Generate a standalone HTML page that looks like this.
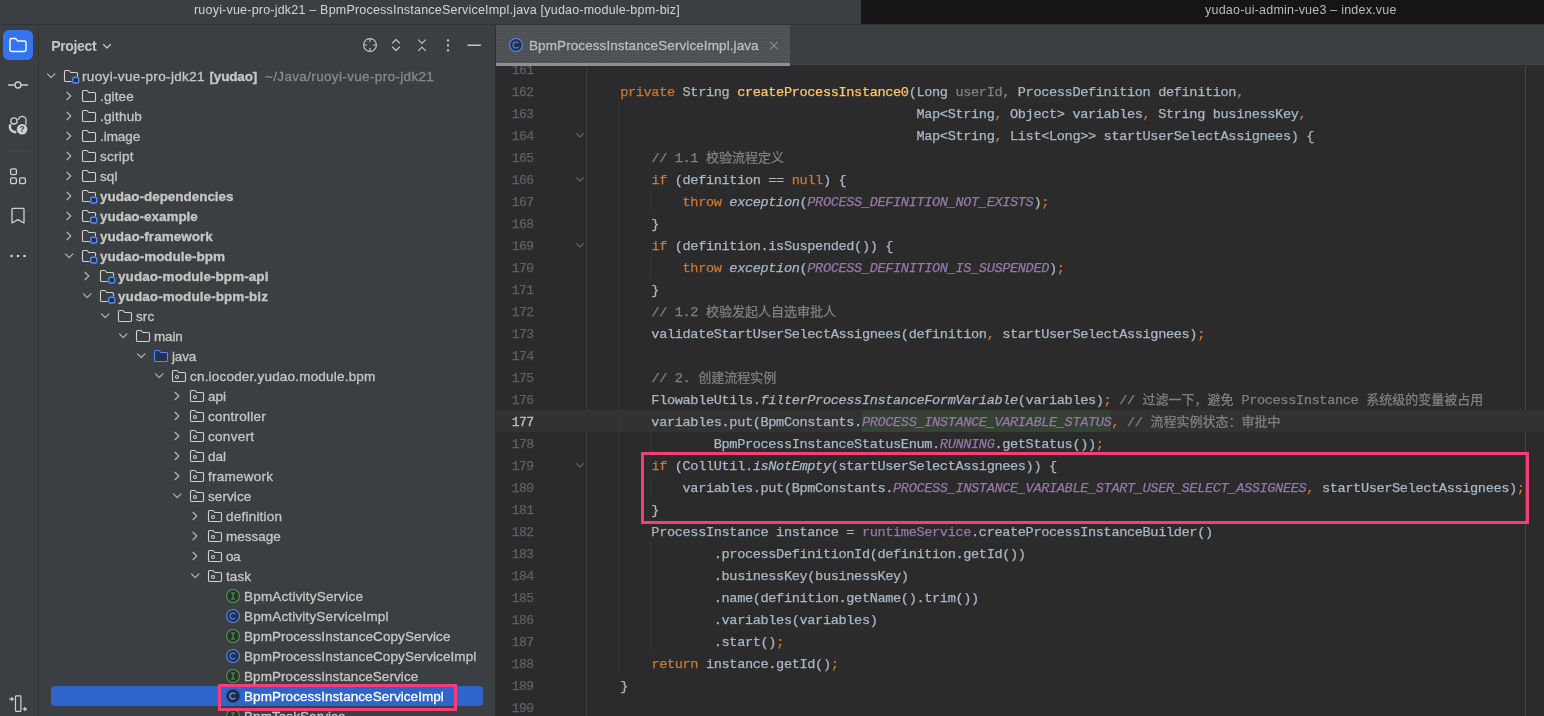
<!DOCTYPE html>
<html lang="zh"><head><meta charset="utf-8"><title>BpmProcessInstanceServiceImpl.java</title>
<style>
*{box-sizing:border-box;margin:0;padding:0}
html,body{width:1544px;height:716px;overflow:hidden;background:#3c3f41}
body{position:relative;font-family:"Liberation Sans", "Noto Sans CJK SC", sans-serif;font-size:13px;color:#c6c6c6}
#root{position:absolute;left:0;top:0;width:1544px;height:716px;will-change:transform}
.abs{position:absolute}
#titleLbg{position:absolute;left:0;top:0;width:861px;height:24px;background:#3c3f41}
#titleRbg{position:absolute;left:861px;top:0;width:683px;height:24px;background:#151515}
#titleL{position:absolute;left:194px;top:1px;line-height:19.4px;font-size:12.5px;color:#d4d4d4;white-space:pre}
#titleR{position:absolute;left:1205px;top:1px;line-height:19.4px;font-size:12.5px;color:#bababa;white-space:pre}
#titleB{position:absolute;left:0;top:24px;width:1544px;height:1px;background:#313335}
#strip{position:absolute;left:0;top:25px;width:38px;height:691px;background:#3c3f41}
#stripB{position:absolute;left:38px;top:25px;width:1px;height:691px;background:#323436}
#proj{position:absolute;left:39px;top:25px;width:456px;height:691px;background:#3c3f41;overflow:hidden}
#projB{position:absolute;left:495px;top:25px;width:1px;height:691px;background:#2d2f31}
#tabs{position:absolute;left:496px;top:25px;width:1048px;height:40px;background:#3c3f41}
#tabsB{position:absolute;left:496px;top:65px;width:1048px;height:1px;background:#2f3032}
#tab{position:absolute;left:496px;top:25px;width:294px;height:38px;background-color:#4d5153;background-image:radial-gradient(circle at 1.5px 1.5px,rgba(255,255,255,.07) 0.4px,transparent 0.9px);background-size:3px 3px}
#tabU{position:absolute;left:496px;top:63px;width:294px;height:3px;background:#8a9099}
#tabT{position:absolute;left:529px;top:36px;line-height:20px;font-size:13.5px;color:#bcbcbc;-webkit-text-stroke:0.3px;white-space:nowrap}
#editor{position:absolute;left:496px;top:66px;width:1048px;height:650px;background:#2b2b2b}
#gutL{position:absolute;left:586px;top:66px;width:1px;height:650px;background:#3a3c3f}
#margin{position:absolute;left:1525px;top:66px;width:1px;height:650px;background:#45484c}
#clip{position:absolute;left:0;top:66px;width:1544px;height:650px;overflow:hidden}
#clip>div{position:absolute;left:0;top:-66px;width:1544px;height:716px}
.ln{position:absolute;left:495.5px;width:38px;height:22px;line-height:22px;padding-top:1.5px;text-align:right;font-family:"Liberation Mono", "Noto Sans CJK SC", monospace;font-size:13px;color:#5d6165;white-space:pre;letter-spacing:-0.55px;-webkit-text-stroke:0.25px}
.ln.cur{color:#bdbdbd;-webkit-text-stroke:0.3px}
.cl{position:absolute;left:589px;height:22px;line-height:22px;padding-top:1.5px;font-family:"Liberation Mono", "Noto Sans CJK SC", monospace;font-size:13.6px;letter-spacing:-0.361px;color:#a9b7c6;white-space:pre;-webkit-text-stroke:0.25px}
.z{font-size:13px;letter-spacing:0}
.curline{position:absolute;left:496px;width:1048px;height:22px;background:#323232}
.guide{position:absolute;width:1px;background:#353638}
.fold{position:absolute;left:572px}
.k{color:#cc7832} .m{color:#ffc66d} .c{color:#808080} .p{color:#9876aa;font-style:italic} .h{color:#9876aa;font-style:italic;background:#344134;padding:4.8px 0 2.8px}
.f{color:#9876aa} .i{font-style:italic} .g{color:#808080}
.box{position:absolute;border:3px solid #f53d78}
.row{position:absolute;left:0;width:495px;height:20px;white-space:nowrap;color:#c6c6c6}
.row .chev{position:absolute;top:2px}
.row .ico{position:absolute;top:2.4px}
.row .lbl{position:absolute;top:1px;line-height:20px;font-size:13.5px;white-space:pre;-webkit-text-stroke:0.3px}
.row b{font-weight:bold}
.row .path{color:#868a91}
.row.selected{color:#fff}
.selrow{position:absolute;left:51px;width:432px;height:20px;background:#2f65ca;border-radius:4px}
#ph{position:absolute;left:51.2px;top:36px;line-height:20px;font-size:14px;letter-spacing:-0.33px;font-weight:bold;color:#c6c6c6}
</style></head><body><div id="root">
<div id="titleLbg"></div><div id="titleRbg"></div>
<div id="titleL" style="letter-spacing:0.206px">ruoyi-vue-pro-jdk21 – BpmProcessInstanceServiceImpl.java [yudao-module-bpm-biz]</div>
<div id="titleR" style="letter-spacing:0.221px">yudao-ui-admin-vue3 – index.vue</div>
<div id="titleB"></div>
<div id="strip"></div><div id="stripB"></div>
<div class="abs" style="left:3px;top:30px;width:30px;height:30px;border-radius:6px;background:#3574f0"></div>
<svg class="abs" style="left:8px;top:35px" width="20" height="20" viewBox="0 0 20 20"><path d="M2 5.2 Q2 3.5 3.7 3.5 H7.6 L9.8 6 H16.3 Q18 6 18 7.7 V14.8 Q18 16.5 16.3 16.5 H3.7 Q2 16.5 2 14.8 Z" fill="none" stroke="#fff" stroke-width="1.4" stroke-linejoin="round"/></svg>
<svg class="abs" style="left:8px;top:75px" width="20" height="20" viewBox="0 0 20 20"><circle cx="10" cy="10" r="3" fill="none" stroke="#ced0d6" stroke-width="1.3"/><path d="M0.5 10 H7 M13 10 H19.5" stroke="#ced0d6" stroke-width="1.3" stroke-linecap="round"/></svg>
<svg class="abs" style="left:7px;top:114px" width="22" height="22" viewBox="0 0 22 22"><circle cx="7" cy="6.9" r="3.1" fill="none" stroke="#ced0d6" stroke-width="1.3"/><path d="M11.6 5.2 A3.5 3.5 0 0 1 18.9 7.3 V10.2" fill="none" stroke="#ced0d6" stroke-width="1.3" stroke-linecap="round"/><path d="M3.1 11.2 Q1.8 16.9 8.3 18.3" fill="none" stroke="#ced0d6" stroke-width="2.5" stroke-linecap="round"/><circle cx="15.1" cy="15.2" r="5.3" fill="#ced0d6"/><text x="15.1" y="18.3" font-size="8.5" font-weight="bold" text-anchor="middle" fill="#3c3f41" font-family="Liberation Sans, sans-serif">?</text></svg>
<div class="abs" style="left:6px;top:150px;width:24px;height:1px;background:repeating-linear-gradient(90deg,#4e5157 0 1px,transparent 1px 2px)"></div>
<svg class="abs" style="left:8px;top:166px" width="20" height="20" viewBox="0 0 20 20"><rect x="2.6" y="2.8" width="5.8" height="5.8" rx="1.4" fill="none" stroke="#ced0d6" stroke-width="1.3"/><rect x="2.6" y="11.8" width="5.8" height="5.8" rx="1.4" fill="none" stroke="#ced0d6" stroke-width="1.3"/><rect x="11.6" y="11.8" width="5.8" height="5.8" rx="1.4" fill="none" stroke="#ced0d6" stroke-width="1.3"/></svg>
<svg class="abs" style="left:8px;top:206px" width="20" height="20" viewBox="0 0 20 20"><path d="M4 3.2 Q4 2.4 4.8 2.4 H15.2 Q16 2.4 16 3.2 V17 L10 13.6 L4 17 Z" fill="none" stroke="#ced0d6" stroke-width="1.3" stroke-linejoin="round"/></svg>
<svg class="abs" style="left:8px;top:246px" width="20" height="20" viewBox="0 0 20 20"><circle cx="3.5" cy="10" r="1.35" fill="#ced0d6"/><circle cx="10" cy="10" r="1.35" fill="#ced0d6"/><circle cx="16.5" cy="10" r="1.35" fill="#ced0d6"/></svg>
<svg class="abs" style="left:6px;top:692px" width="24" height="22" viewBox="0 0 24 22"><rect x="9.5" y="3.8" width="5.4" height="15.6" rx="0.8" fill="none" stroke="#ced0d6" stroke-width="1.2"/><path d="M3 7 H6" stroke="#ced0d6" stroke-width="1.1"/><path d="M5.3 4.6 L8.2 7 L5.3 9.4 Z" fill="#ced0d6"/><path d="M16.5 17 H19" stroke="#ced0d6" stroke-width="1.1"/><path d="M18.3 14.6 L21.2 17 L18.3 19.4 Z" fill="#ced0d6"/></svg>
<div id="proj"></div><div id="projB"></div>
<div id="ph">Project</div>
<svg class="abs" style="left:99px;top:38px" width="16" height="16" viewBox="0 0 16 16"><path d="M4.5 6.5 L8 10 L11.5 6.5" fill="none" stroke="#c3c5c9" stroke-width="1.2" stroke-linecap="round" stroke-linejoin="round"/></svg>
<svg class="abs" style="left:362px;top:37px" width="16" height="16" viewBox="0 0 16 16"><circle cx="8" cy="8" r="6.4" fill="none" stroke="#c3c5c9" stroke-width="1.1"/><path d="M8 1.6 V5 M8 11 V14.4 M1.6 8 H5 M11 8 H14.4" stroke="#c3c5c9" stroke-width="1.1"/></svg>
<svg class="abs" style="left:388px;top:37px" width="16" height="16" viewBox="0 0 16 16"><path d="M4.5 6 L8 2.5 L11.5 6 M4.5 10 L8 13.5 L11.5 10" fill="none" stroke="#c3c5c9" stroke-width="1.1" stroke-linecap="round" stroke-linejoin="round"/></svg>
<svg class="abs" style="left:414px;top:37px" width="16" height="16" viewBox="0 0 16 16"><path d="M4.5 2.8 L8 6.3 L11.5 2.8 M4.5 13.7 L8 10.2 L11.5 13.7" fill="none" stroke="#c3c5c9" stroke-width="1.1" stroke-linecap="round" stroke-linejoin="round"/></svg>
<svg class="abs" style="left:440px;top:37px" width="16" height="16" viewBox="0 0 16 16"><rect x="6.9" y="2.2" width="2.2" height="2.2" rx="0.7" fill="#c3c5c9"/><rect x="6.9" y="7.2" width="2.2" height="2.2" rx="0.7" fill="#c3c5c9"/><rect x="6.9" y="12.2" width="2.2" height="2.2" rx="0.7" fill="#c3c5c9"/></svg>
<svg class="abs" style="left:465px;top:37px" width="18" height="16" viewBox="0 0 18 16"><path d="M3 8.3 H15.3" stroke="#c3c5c9" stroke-width="1.6" stroke-linecap="round" fill="none"/></svg>
<div class="row" style="top:66px"><svg class="chev" style="left:42.5px" width="16" height="16" viewBox="0 0 16 16"><path d="M4.5 5.9 L8.2 9.6 L11.9 5.9" fill="none" stroke="#b0b3b8" stroke-width="1.25" stroke-linecap="round" stroke-linejoin="round"/></svg><svg class="ico" style="left:63px" width="16" height="16" viewBox="0 0 16 16" overflow="visible"><path d="M8.2 13.5 H2.6 Q1.5 13.5 1.5 12.4 V3.6 Q1.5 2.5 2.6 2.5 H6 L7.8 4.5 H13.4 Q14.5 4.5 14.5 5.6 V8" fill="none" stroke="#ced0d6" stroke-width="1.1" stroke-linejoin="round" stroke-linecap="round"/><rect x="9.7" y="9.3" width="6" height="5.7" rx="1.5" fill="#25324d" stroke="#548af7" stroke-width="1.4"/></svg><span class="lbl" style="left:82px;letter-spacing:0.347px">ruoyi-vue-pro-jdk21</span><span class="lbl" style="left:209.5px;letter-spacing:-0.164px"><b>[yudao]</b></span><span class="lbl path" style="left:265px;letter-spacing:0.346px">~/Java/ruoyi-vue-pro-jdk21</span></div>
<div class="row" style="top:86px"><svg class="chev" style="left:60.5px" width="16" height="16" viewBox="0 0 16 16"><path d="M6 4.3 L9.8 8 L6 11.7" fill="none" stroke="#b0b3b8" stroke-width="1.25" stroke-linecap="round" stroke-linejoin="round"/></svg><svg class="ico" style="left:81px" width="16" height="16" viewBox="0 0 16 16" overflow="visible"><path d="M1.5 3.6 Q1.5 2.5 2.6 2.5 H6 L7.8 4.5 H13.4 Q14.5 4.5 14.5 5.6 V12.4 Q14.5 13.5 13.4 13.5 H2.6 Q1.5 13.5 1.5 12.4 Z" fill="none" stroke="#ced0d6" stroke-width="1.1" stroke-linejoin="round"/></svg><span class="lbl" style="left:100px;letter-spacing:0.145px">.gitee</span></div>
<div class="row" style="top:106px"><svg class="chev" style="left:60.5px" width="16" height="16" viewBox="0 0 16 16"><path d="M6 4.3 L9.8 8 L6 11.7" fill="none" stroke="#b0b3b8" stroke-width="1.25" stroke-linecap="round" stroke-linejoin="round"/></svg><svg class="ico" style="left:81px" width="16" height="16" viewBox="0 0 16 16" overflow="visible"><path d="M1.5 3.6 Q1.5 2.5 2.6 2.5 H6 L7.8 4.5 H13.4 Q14.5 4.5 14.5 5.6 V12.4 Q14.5 13.5 13.4 13.5 H2.6 Q1.5 13.5 1.5 12.4 Z" fill="none" stroke="#ced0d6" stroke-width="1.1" stroke-linejoin="round"/></svg><span class="lbl" style="left:100px;letter-spacing:0.222px">.github</span></div>
<div class="row" style="top:126px"><svg class="chev" style="left:60.5px" width="16" height="16" viewBox="0 0 16 16"><path d="M6 4.3 L9.8 8 L6 11.7" fill="none" stroke="#b0b3b8" stroke-width="1.25" stroke-linecap="round" stroke-linejoin="round"/></svg><svg class="ico" style="left:81px" width="16" height="16" viewBox="0 0 16 16" overflow="visible"><path d="M1.5 3.6 Q1.5 2.5 2.6 2.5 H6 L7.8 4.5 H13.4 Q14.5 4.5 14.5 5.6 V12.4 Q14.5 13.5 13.4 13.5 H2.6 Q1.5 13.5 1.5 12.4 Z" fill="none" stroke="#ced0d6" stroke-width="1.1" stroke-linejoin="round"/></svg><span class="lbl" style="left:100px;letter-spacing:-0.055px">.image</span></div>
<div class="row" style="top:146px"><svg class="chev" style="left:60.5px" width="16" height="16" viewBox="0 0 16 16"><path d="M6 4.3 L9.8 8 L6 11.7" fill="none" stroke="#b0b3b8" stroke-width="1.25" stroke-linecap="round" stroke-linejoin="round"/></svg><svg class="ico" style="left:81px" width="16" height="16" viewBox="0 0 16 16" overflow="visible"><path d="M1.5 3.6 Q1.5 2.5 2.6 2.5 H6 L7.8 4.5 H13.4 Q14.5 4.5 14.5 5.6 V12.4 Q14.5 13.5 13.4 13.5 H2.6 Q1.5 13.5 1.5 12.4 Z" fill="none" stroke="#ced0d6" stroke-width="1.1" stroke-linejoin="round"/></svg><span class="lbl" style="left:100px;letter-spacing:0.272px">script</span></div>
<div class="row" style="top:166px"><svg class="chev" style="left:60.5px" width="16" height="16" viewBox="0 0 16 16"><path d="M6 4.3 L9.8 8 L6 11.7" fill="none" stroke="#b0b3b8" stroke-width="1.25" stroke-linecap="round" stroke-linejoin="round"/></svg><svg class="ico" style="left:81px" width="16" height="16" viewBox="0 0 16 16" overflow="visible"><path d="M1.5 3.6 Q1.5 2.5 2.6 2.5 H6 L7.8 4.5 H13.4 Q14.5 4.5 14.5 5.6 V12.4 Q14.5 13.5 13.4 13.5 H2.6 Q1.5 13.5 1.5 12.4 Z" fill="none" stroke="#ced0d6" stroke-width="1.1" stroke-linejoin="round"/></svg><span class="lbl" style="left:100px;letter-spacing:0.111px">sql</span></div>
<div class="row" style="top:186px"><svg class="chev" style="left:60.5px" width="16" height="16" viewBox="0 0 16 16"><path d="M6 4.3 L9.8 8 L6 11.7" fill="none" stroke="#b0b3b8" stroke-width="1.25" stroke-linecap="round" stroke-linejoin="round"/></svg><svg class="ico" style="left:81px" width="16" height="16" viewBox="0 0 16 16" overflow="visible"><path d="M8.2 13.5 H2.6 Q1.5 13.5 1.5 12.4 V3.6 Q1.5 2.5 2.6 2.5 H6 L7.8 4.5 H13.4 Q14.5 4.5 14.5 5.6 V8" fill="none" stroke="#ced0d6" stroke-width="1.1" stroke-linejoin="round" stroke-linecap="round"/><rect x="9.7" y="9.3" width="6" height="5.7" rx="1.5" fill="#25324d" stroke="#548af7" stroke-width="1.4"/></svg><span class="lbl" style="left:100px;letter-spacing:-0.044px"><b>yudao-dependencies</b></span></div>
<div class="row" style="top:206px"><svg class="chev" style="left:60.5px" width="16" height="16" viewBox="0 0 16 16"><path d="M6 4.3 L9.8 8 L6 11.7" fill="none" stroke="#b0b3b8" stroke-width="1.25" stroke-linecap="round" stroke-linejoin="round"/></svg><svg class="ico" style="left:81px" width="16" height="16" viewBox="0 0 16 16" overflow="visible"><path d="M8.2 13.5 H2.6 Q1.5 13.5 1.5 12.4 V3.6 Q1.5 2.5 2.6 2.5 H6 L7.8 4.5 H13.4 Q14.5 4.5 14.5 5.6 V8" fill="none" stroke="#ced0d6" stroke-width="1.1" stroke-linejoin="round" stroke-linecap="round"/><rect x="9.7" y="9.3" width="6" height="5.7" rx="1.5" fill="#25324d" stroke="#548af7" stroke-width="1.4"/></svg><span class="lbl" style="left:100px;letter-spacing:-0.038px"><b>yudao-example</b></span></div>
<div class="row" style="top:226px"><svg class="chev" style="left:60.5px" width="16" height="16" viewBox="0 0 16 16"><path d="M6 4.3 L9.8 8 L6 11.7" fill="none" stroke="#b0b3b8" stroke-width="1.25" stroke-linecap="round" stroke-linejoin="round"/></svg><svg class="ico" style="left:81px" width="16" height="16" viewBox="0 0 16 16" overflow="visible"><path d="M8.2 13.5 H2.6 Q1.5 13.5 1.5 12.4 V3.6 Q1.5 2.5 2.6 2.5 H6 L7.8 4.5 H13.4 Q14.5 4.5 14.5 5.6 V8" fill="none" stroke="#ced0d6" stroke-width="1.1" stroke-linejoin="round" stroke-linecap="round"/><rect x="9.7" y="9.3" width="6" height="5.7" rx="1.5" fill="#25324d" stroke="#548af7" stroke-width="1.4"/></svg><span class="lbl" style="left:100px;letter-spacing:0.018px"><b>yudao-framework</b></span></div>
<div class="row" style="top:246px"><svg class="chev" style="left:60.5px" width="16" height="16" viewBox="0 0 16 16"><path d="M4.5 5.9 L8.2 9.6 L11.9 5.9" fill="none" stroke="#b0b3b8" stroke-width="1.25" stroke-linecap="round" stroke-linejoin="round"/></svg><svg class="ico" style="left:81px" width="16" height="16" viewBox="0 0 16 16" overflow="visible"><path d="M8.2 13.5 H2.6 Q1.5 13.5 1.5 12.4 V3.6 Q1.5 2.5 2.6 2.5 H6 L7.8 4.5 H13.4 Q14.5 4.5 14.5 5.6 V8" fill="none" stroke="#ced0d6" stroke-width="1.1" stroke-linejoin="round" stroke-linecap="round"/><rect x="9.7" y="9.3" width="6" height="5.7" rx="1.5" fill="#25324d" stroke="#548af7" stroke-width="1.4"/></svg><span class="lbl" style="left:100px;letter-spacing:-0.016px"><b>yudao-module-bpm</b></span></div>
<div class="row" style="top:266px"><svg class="chev" style="left:78.5px" width="16" height="16" viewBox="0 0 16 16"><path d="M6 4.3 L9.8 8 L6 11.7" fill="none" stroke="#b0b3b8" stroke-width="1.25" stroke-linecap="round" stroke-linejoin="round"/></svg><svg class="ico" style="left:99px" width="16" height="16" viewBox="0 0 16 16" overflow="visible"><path d="M8.2 13.5 H2.6 Q1.5 13.5 1.5 12.4 V3.6 Q1.5 2.5 2.6 2.5 H6 L7.8 4.5 H13.4 Q14.5 4.5 14.5 5.6 V8" fill="none" stroke="#ced0d6" stroke-width="1.1" stroke-linejoin="round" stroke-linecap="round"/><rect x="9.7" y="9.3" width="6" height="5.7" rx="1.5" fill="#25324d" stroke="#548af7" stroke-width="1.4"/></svg><span class="lbl" style="left:118px;letter-spacing:0.062px"><b>yudao-module-bpm-api</b></span></div>
<div class="row" style="top:286px"><svg class="chev" style="left:78.5px" width="16" height="16" viewBox="0 0 16 16"><path d="M4.5 5.9 L8.2 9.6 L11.9 5.9" fill="none" stroke="#b0b3b8" stroke-width="1.25" stroke-linecap="round" stroke-linejoin="round"/></svg><svg class="ico" style="left:99px" width="16" height="16" viewBox="0 0 16 16" overflow="visible"><path d="M8.2 13.5 H2.6 Q1.5 13.5 1.5 12.4 V3.6 Q1.5 2.5 2.6 2.5 H6 L7.8 4.5 H13.4 Q14.5 4.5 14.5 5.6 V8" fill="none" stroke="#ced0d6" stroke-width="1.1" stroke-linejoin="round" stroke-linecap="round"/><rect x="9.7" y="9.3" width="6" height="5.7" rx="1.5" fill="#25324d" stroke="#548af7" stroke-width="1.4"/></svg><span class="lbl" style="left:118px;letter-spacing:0.075px"><b>yudao-module-bpm-biz</b></span></div>
<div class="row" style="top:306px"><svg class="chev" style="left:96.5px" width="16" height="16" viewBox="0 0 16 16"><path d="M4.5 5.9 L8.2 9.6 L11.9 5.9" fill="none" stroke="#b0b3b8" stroke-width="1.25" stroke-linecap="round" stroke-linejoin="round"/></svg><svg class="ico" style="left:117px" width="16" height="16" viewBox="0 0 16 16" overflow="visible"><path d="M1.5 3.6 Q1.5 2.5 2.6 2.5 H6 L7.8 4.5 H13.4 Q14.5 4.5 14.5 5.6 V12.4 Q14.5 13.5 13.4 13.5 H2.6 Q1.5 13.5 1.5 12.4 Z" fill="none" stroke="#ced0d6" stroke-width="1.1" stroke-linejoin="round"/></svg><span class="lbl" style="left:136px;letter-spacing:0.100px">src</span></div>
<div class="row" style="top:326px"><svg class="chev" style="left:114.5px" width="16" height="16" viewBox="0 0 16 16"><path d="M4.5 5.9 L8.2 9.6 L11.9 5.9" fill="none" stroke="#b0b3b8" stroke-width="1.25" stroke-linecap="round" stroke-linejoin="round"/></svg><svg class="ico" style="left:135px" width="16" height="16" viewBox="0 0 16 16" overflow="visible"><path d="M1.5 3.6 Q1.5 2.5 2.6 2.5 H6 L7.8 4.5 H13.4 Q14.5 4.5 14.5 5.6 V12.4 Q14.5 13.5 13.4 13.5 H2.6 Q1.5 13.5 1.5 12.4 Z" fill="none" stroke="#ced0d6" stroke-width="1.1" stroke-linejoin="round"/></svg><span class="lbl" style="left:154px;letter-spacing:-0.166px">main</span></div>
<div class="row" style="top:346px"><svg class="chev" style="left:132.5px" width="16" height="16" viewBox="0 0 16 16"><path d="M4.5 5.9 L8.2 9.6 L11.9 5.9" fill="none" stroke="#b0b3b8" stroke-width="1.25" stroke-linecap="round" stroke-linejoin="round"/></svg><svg class="ico" style="left:153px" width="16" height="16" viewBox="0 0 16 16" overflow="visible"><path d="M1.5 3.6 Q1.5 2.5 2.6 2.5 H6 L7.8 4.5 H13.4 Q14.5 4.5 14.5 5.6 V12.4 Q14.5 13.5 13.4 13.5 H2.6 Q1.5 13.5 1.5 12.4 Z" fill="#25324d" stroke="#548af7" stroke-width="1.1" stroke-linejoin="round"/></svg><span class="lbl" style="left:172px;letter-spacing:-0.141px">java</span></div>
<div class="row" style="top:366px"><svg class="chev" style="left:150.5px" width="16" height="16" viewBox="0 0 16 16"><path d="M4.5 5.9 L8.2 9.6 L11.9 5.9" fill="none" stroke="#b0b3b8" stroke-width="1.25" stroke-linecap="round" stroke-linejoin="round"/></svg><svg class="ico" style="left:171px" width="16" height="16" viewBox="0 0 16 16" overflow="visible"><path d="M1.5 3.6 Q1.5 2.5 2.6 2.5 H6 L7.8 4.5 H13.4 Q14.5 4.5 14.5 5.6 V12.4 Q14.5 13.5 13.4 13.5 H2.6 Q1.5 13.5 1.5 12.4 Z" fill="none" stroke="#ced0d6" stroke-width="1.1" stroke-linejoin="round"/><circle cx="6" cy="9" r="1.5" fill="none" stroke="#ced0d6" stroke-width="1.1"/></svg><span class="lbl" style="left:190px;letter-spacing:0.199px">cn.iocoder.yudao.module.bpm</span></div>
<div class="row" style="top:386px"><svg class="chev" style="left:168.5px" width="16" height="16" viewBox="0 0 16 16"><path d="M6 4.3 L9.8 8 L6 11.7" fill="none" stroke="#b0b3b8" stroke-width="1.25" stroke-linecap="round" stroke-linejoin="round"/></svg><svg class="ico" style="left:189px" width="16" height="16" viewBox="0 0 16 16" overflow="visible"><path d="M1.5 3.6 Q1.5 2.5 2.6 2.5 H6 L7.8 4.5 H13.4 Q14.5 4.5 14.5 5.6 V12.4 Q14.5 13.5 13.4 13.5 H2.6 Q1.5 13.5 1.5 12.4 Z" fill="none" stroke="#ced0d6" stroke-width="1.1" stroke-linejoin="round"/><circle cx="6" cy="9" r="1.5" fill="none" stroke="#ced0d6" stroke-width="1.1"/></svg><span class="lbl" style="left:208px;letter-spacing:-0.005px">api</span></div>
<div class="row" style="top:406px"><svg class="chev" style="left:168.5px" width="16" height="16" viewBox="0 0 16 16"><path d="M6 4.3 L9.8 8 L6 11.7" fill="none" stroke="#b0b3b8" stroke-width="1.25" stroke-linecap="round" stroke-linejoin="round"/></svg><svg class="ico" style="left:189px" width="16" height="16" viewBox="0 0 16 16" overflow="visible"><path d="M1.5 3.6 Q1.5 2.5 2.6 2.5 H6 L7.8 4.5 H13.4 Q14.5 4.5 14.5 5.6 V12.4 Q14.5 13.5 13.4 13.5 H2.6 Q1.5 13.5 1.5 12.4 Z" fill="none" stroke="#ced0d6" stroke-width="1.1" stroke-linejoin="round"/><circle cx="6" cy="9" r="1.5" fill="none" stroke="#ced0d6" stroke-width="1.1"/></svg><span class="lbl" style="left:208px;letter-spacing:0.247px">controller</span></div>
<div class="row" style="top:426px"><svg class="chev" style="left:168.5px" width="16" height="16" viewBox="0 0 16 16"><path d="M6 4.3 L9.8 8 L6 11.7" fill="none" stroke="#b0b3b8" stroke-width="1.25" stroke-linecap="round" stroke-linejoin="round"/></svg><svg class="ico" style="left:189px" width="16" height="16" viewBox="0 0 16 16" overflow="visible"><path d="M1.5 3.6 Q1.5 2.5 2.6 2.5 H6 L7.8 4.5 H13.4 Q14.5 4.5 14.5 5.6 V12.4 Q14.5 13.5 13.4 13.5 H2.6 Q1.5 13.5 1.5 12.4 Z" fill="none" stroke="#ced0d6" stroke-width="1.1" stroke-linejoin="round"/><circle cx="6" cy="9" r="1.5" fill="none" stroke="#ced0d6" stroke-width="1.1"/></svg><span class="lbl" style="left:208px;letter-spacing:0.288px">convert</span></div>
<div class="row" style="top:446px"><svg class="chev" style="left:168.5px" width="16" height="16" viewBox="0 0 16 16"><path d="M6 4.3 L9.8 8 L6 11.7" fill="none" stroke="#b0b3b8" stroke-width="1.25" stroke-linecap="round" stroke-linejoin="round"/></svg><svg class="ico" style="left:189px" width="16" height="16" viewBox="0 0 16 16" overflow="visible"><path d="M1.5 3.6 Q1.5 2.5 2.6 2.5 H6 L7.8 4.5 H13.4 Q14.5 4.5 14.5 5.6 V12.4 Q14.5 13.5 13.4 13.5 H2.6 Q1.5 13.5 1.5 12.4 Z" fill="none" stroke="#ced0d6" stroke-width="1.1" stroke-linejoin="round"/><circle cx="6" cy="9" r="1.5" fill="none" stroke="#ced0d6" stroke-width="1.1"/></svg><span class="lbl" style="left:208px;letter-spacing:-0.005px">dal</span></div>
<div class="row" style="top:466px"><svg class="chev" style="left:168.5px" width="16" height="16" viewBox="0 0 16 16"><path d="M6 4.3 L9.8 8 L6 11.7" fill="none" stroke="#b0b3b8" stroke-width="1.25" stroke-linecap="round" stroke-linejoin="round"/></svg><svg class="ico" style="left:189px" width="16" height="16" viewBox="0 0 16 16" overflow="visible"><path d="M1.5 3.6 Q1.5 2.5 2.6 2.5 H6 L7.8 4.5 H13.4 Q14.5 4.5 14.5 5.6 V12.4 Q14.5 13.5 13.4 13.5 H2.6 Q1.5 13.5 1.5 12.4 Z" fill="none" stroke="#ced0d6" stroke-width="1.1" stroke-linejoin="round"/><circle cx="6" cy="9" r="1.5" fill="none" stroke="#ced0d6" stroke-width="1.1"/></svg><span class="lbl" style="left:208px;letter-spacing:0.254px">framework</span></div>
<div class="row" style="top:486px"><svg class="chev" style="left:168.5px" width="16" height="16" viewBox="0 0 16 16"><path d="M4.5 5.9 L8.2 9.6 L11.9 5.9" fill="none" stroke="#b0b3b8" stroke-width="1.25" stroke-linecap="round" stroke-linejoin="round"/></svg><svg class="ico" style="left:189px" width="16" height="16" viewBox="0 0 16 16" overflow="visible"><path d="M1.5 3.6 Q1.5 2.5 2.6 2.5 H6 L7.8 4.5 H13.4 Q14.5 4.5 14.5 5.6 V12.4 Q14.5 13.5 13.4 13.5 H2.6 Q1.5 13.5 1.5 12.4 Z" fill="none" stroke="#ced0d6" stroke-width="1.1" stroke-linejoin="round"/><circle cx="6" cy="9" r="1.5" fill="none" stroke="#ced0d6" stroke-width="1.1"/></svg><span class="lbl" style="left:208px;letter-spacing:0.076px">service</span></div>
<div class="row" style="top:506px"><svg class="chev" style="left:186.5px" width="16" height="16" viewBox="0 0 16 16"><path d="M6 4.3 L9.8 8 L6 11.7" fill="none" stroke="#b0b3b8" stroke-width="1.25" stroke-linecap="round" stroke-linejoin="round"/></svg><svg class="ico" style="left:207px" width="16" height="16" viewBox="0 0 16 16" overflow="visible"><path d="M1.5 3.6 Q1.5 2.5 2.6 2.5 H6 L7.8 4.5 H13.4 Q14.5 4.5 14.5 5.6 V12.4 Q14.5 13.5 13.4 13.5 H2.6 Q1.5 13.5 1.5 12.4 Z" fill="none" stroke="#ced0d6" stroke-width="1.1" stroke-linejoin="round"/><circle cx="6" cy="9" r="1.5" fill="none" stroke="#ced0d6" stroke-width="1.1"/></svg><span class="lbl" style="left:226px;letter-spacing:0.225px">definition</span></div>
<div class="row" style="top:526px"><svg class="chev" style="left:186.5px" width="16" height="16" viewBox="0 0 16 16"><path d="M6 4.3 L9.8 8 L6 11.7" fill="none" stroke="#b0b3b8" stroke-width="1.25" stroke-linecap="round" stroke-linejoin="round"/></svg><svg class="ico" style="left:207px" width="16" height="16" viewBox="0 0 16 16" overflow="visible"><path d="M1.5 3.6 Q1.5 2.5 2.6 2.5 H6 L7.8 4.5 H13.4 Q14.5 4.5 14.5 5.6 V12.4 Q14.5 13.5 13.4 13.5 H2.6 Q1.5 13.5 1.5 12.4 Z" fill="none" stroke="#ced0d6" stroke-width="1.1" stroke-linejoin="round"/><circle cx="6" cy="9" r="1.5" fill="none" stroke="#ced0d6" stroke-width="1.1"/></svg><span class="lbl" style="left:226px;letter-spacing:-0.012px">message</span></div>
<div class="row" style="top:546px"><svg class="chev" style="left:186.5px" width="16" height="16" viewBox="0 0 16 16"><path d="M6 4.3 L9.8 8 L6 11.7" fill="none" stroke="#b0b3b8" stroke-width="1.25" stroke-linecap="round" stroke-linejoin="round"/></svg><svg class="ico" style="left:207px" width="16" height="16" viewBox="0 0 16 16" overflow="visible"><path d="M1.5 3.6 Q1.5 2.5 2.6 2.5 H6 L7.8 4.5 H13.4 Q14.5 4.5 14.5 5.6 V12.4 Q14.5 13.5 13.4 13.5 H2.6 Q1.5 13.5 1.5 12.4 Z" fill="none" stroke="#ced0d6" stroke-width="1.1" stroke-linejoin="round"/><circle cx="6" cy="9" r="1.5" fill="none" stroke="#ced0d6" stroke-width="1.1"/></svg><span class="lbl" style="left:226px;letter-spacing:-0.416px">oa</span></div>
<div class="row" style="top:566px"><svg class="chev" style="left:186.5px" width="16" height="16" viewBox="0 0 16 16"><path d="M4.5 5.9 L8.2 9.6 L11.9 5.9" fill="none" stroke="#b0b3b8" stroke-width="1.25" stroke-linecap="round" stroke-linejoin="round"/></svg><svg class="ico" style="left:207px" width="16" height="16" viewBox="0 0 16 16" overflow="visible"><path d="M1.5 3.6 Q1.5 2.5 2.6 2.5 H6 L7.8 4.5 H13.4 Q14.5 4.5 14.5 5.6 V12.4 Q14.5 13.5 13.4 13.5 H2.6 Q1.5 13.5 1.5 12.4 Z" fill="none" stroke="#ced0d6" stroke-width="1.1" stroke-linejoin="round"/><circle cx="6" cy="9" r="1.5" fill="none" stroke="#ced0d6" stroke-width="1.1"/></svg><span class="lbl" style="left:226px;letter-spacing:0.059px">task</span></div>
<div class="row" style="top:586px"><svg class="ico" style="left:225px" width="16" height="16" viewBox="0 0 16 16" overflow="visible"><circle cx="8" cy="8" r="6.5" fill="#253627" stroke="#57965c" stroke-width="1.1"/><path d="M6 5 H10 M8 5 V11 M6 11 H10" fill="none" stroke="#57965c" stroke-width="1.1"/></svg><span class="lbl" style="left:244px;letter-spacing:0.198px">BpmActivityService</span></div>
<div class="row" style="top:606px"><svg class="ico" style="left:225px" width="16" height="16" viewBox="0 0 16 16" overflow="visible"><circle cx="8" cy="8" r="6.5" fill="#25324d" stroke="#548af7" stroke-width="1.1"/><path d="M10.4 6.3 A3 3 0 1 0 10.4 9.7" fill="none" stroke="#548af7" stroke-width="1.1"/></svg><span class="lbl" style="left:244px;letter-spacing:0.166px">BpmActivityServiceImpl</span></div>
<div class="row" style="top:626px"><svg class="ico" style="left:225px" width="16" height="16" viewBox="0 0 16 16" overflow="visible"><circle cx="8" cy="8" r="6.5" fill="#253627" stroke="#57965c" stroke-width="1.1"/><path d="M6 5 H10 M8 5 V11 M6 11 H10" fill="none" stroke="#57965c" stroke-width="1.1"/></svg><span class="lbl" style="left:244px;letter-spacing:0.083px">BpmProcessInstanceCopyService</span></div>
<div class="row" style="top:646px"><svg class="ico" style="left:225px" width="16" height="16" viewBox="0 0 16 16" overflow="visible"><circle cx="8" cy="8" r="6.5" fill="#25324d" stroke="#548af7" stroke-width="1.1"/><path d="M10.4 6.3 A3 3 0 1 0 10.4 9.7" fill="none" stroke="#548af7" stroke-width="1.1"/></svg><span class="lbl" style="left:244px;letter-spacing:0.082px">BpmProcessInstanceCopyServiceImpl</span></div>
<div class="row" style="top:666px"><svg class="ico" style="left:225px" width="16" height="16" viewBox="0 0 16 16" overflow="visible"><circle cx="8" cy="8" r="6.5" fill="#253627" stroke="#57965c" stroke-width="1.1"/><path d="M6 5 H10 M8 5 V11 M6 11 H10" fill="none" stroke="#57965c" stroke-width="1.1"/></svg><span class="lbl" style="left:244px;letter-spacing:0.069px">BpmProcessInstanceService</span></div>
<div class="selrow" style="top:686px"></div>
<div class="row selected" style="top:686px"><svg class="ico" style="left:225px" width="16" height="16" viewBox="0 0 16 16" overflow="visible"><circle cx="8" cy="8" r="6.5" fill="#1e2a4a" stroke="#2b3f74" stroke-width="1.1"/><path d="M10.4 6.3 A3 3 0 1 0 10.4 9.7" fill="none" stroke="#8fa9e8" stroke-width="1.1"/></svg><span class="lbl" style="left:244px;letter-spacing:0.063px">BpmProcessInstanceServiceImpl</span></div>
<div class="row" style="top:706px"><svg class="ico" style="left:225px" width="16" height="16" viewBox="0 0 16 16" overflow="visible"><circle cx="8" cy="8" r="6.5" fill="#253627" stroke="#57965c" stroke-width="1.1"/><path d="M6 5 H10 M8 5 V11 M6 11 H10" fill="none" stroke="#57965c" stroke-width="1.1"/></svg><span class="lbl" style="left:244px;letter-spacing:0.068px">BpmTaskService</span></div>
<div class="box" style="left:218px;top:684px;width:239px;height:27px"></div>
<div id="tabs"></div><div id="tabsB"></div>
<div id="editor"></div>
<div id="gutL"></div><div id="margin"></div>
<div id="clip"><div>
<div class="curline" style="top:410px"></div>
<div class="guide" style="left:618.0px;top:102px;height:572px"></div>
<div class="guide" style="left:649.9px;top:190px;height:22px"></div>
<div class="guide" style="left:649.9px;top:256px;height:22px"></div>
<div class="guide" style="left:649.9px;top:432px;height:22px"></div>
<div class="guide" style="left:649.9px;top:476px;height:22px"></div>
<div class="guide" style="left:649.9px;top:542px;height:110px"></div>
<div class="ln" style="top:58px">161</div>
<div class="ln" style="top:80px">162</div>
<div class="cl" style="top:80px">    <span class="k">private</span> String <span class="m">createProcessInstance0</span>(Long <span class="g">userId</span><span class="k">,</span> ProcessDefinition definition<span class="k">,</span></div>
<div class="ln" style="top:102px">163</div>
<div class="cl" style="top:102px">                                          Map&lt;String<span class="k">,</span> Object&gt; variables<span class="k">,</span> String businessKey<span class="k">,</span></div>
<div class="ln" style="top:124px">164</div>
<svg class="fold" style="top:127px" width="16" height="16" viewBox="0 0 16 16"><path d="M4.6 6.6 L8 10 L11.4 6.6" fill="none" stroke="#63676c" stroke-width="1.1" stroke-linecap="round" stroke-linejoin="round"/></svg>
<div class="cl" style="top:124px">                                          Map&lt;String<span class="k">,</span> List&lt;Long&gt;&gt; startUserSelectAssignees) {</div>
<div class="ln" style="top:146px">165</div>
<div class="cl" style="top:146px">        <span class="c">// 1.1 <span class="z">校验流程定义</span></span></div>
<div class="ln" style="top:168px">166</div>
<svg class="fold" style="top:171px" width="16" height="16" viewBox="0 0 16 16"><path d="M4.6 6.6 L8 10 L11.4 6.6" fill="none" stroke="#63676c" stroke-width="1.1" stroke-linecap="round" stroke-linejoin="round"/></svg>
<div class="cl" style="top:168px">        <span class="k">if</span> (definition == <span class="k">null</span>) {</div>
<div class="ln" style="top:190px">167</div>
<div class="cl" style="top:190px">            <span class="k">throw</span> <span class="i">exception</span>(<span class="p">PROCESS_DEFINITION_NOT_EXISTS</span>)<span class="k">;</span></div>
<div class="ln" style="top:212px">168</div>
<div class="cl" style="top:212px">        }</div>
<div class="ln" style="top:234px">169</div>
<svg class="fold" style="top:237px" width="16" height="16" viewBox="0 0 16 16"><path d="M4.6 6.6 L8 10 L11.4 6.6" fill="none" stroke="#63676c" stroke-width="1.1" stroke-linecap="round" stroke-linejoin="round"/></svg>
<div class="cl" style="top:234px">        <span class="k">if</span> (definition.isSuspended()) {</div>
<div class="ln" style="top:256px">170</div>
<div class="cl" style="top:256px">            <span class="k">throw</span> <span class="i">exception</span>(<span class="p">PROCESS_DEFINITION_IS_SUSPENDED</span>)<span class="k">;</span></div>
<div class="ln" style="top:278px">171</div>
<div class="cl" style="top:278px">        }</div>
<div class="ln" style="top:300px">172</div>
<div class="cl" style="top:300px">        <span class="c">// 1.2 <span class="z">校验发起人自选审批人</span></span></div>
<div class="ln" style="top:322px">173</div>
<div class="cl" style="top:322px">        validateStartUserSelectAssignees(definition<span class="k">,</span> startUserSelectAssignees)<span class="k">;</span></div>
<div class="ln" style="top:344px">174</div>
<div class="ln" style="top:366px">175</div>
<div class="cl" style="top:366px">        <span class="c">// 2. <span class="z">创建流程实例</span></span></div>
<div class="ln" style="top:388px">176</div>
<div class="cl" style="top:388px">        FlowableUtils.<span class="i">filterProcessInstanceFormVariable</span>(variables)<span class="k">;</span> <span class="c">// <span class="z">过滤一下，避免</span> ProcessInstance <span class="z">系统级的变量被占用</span></span></div>
<div class="ln cur" style="top:410px">177</div>
<div class="cl" style="top:410px">        variables.put(BpmConstants.<span class="h">PROCESS_INSTANCE_VARIABLE_STATUS</span><span class="k">,</span> <span class="c">// <span class="z">流程实例状态：审批中</span></span></div>
<div class="ln" style="top:432px">178</div>
<div class="cl" style="top:432px">                BpmProcessInstanceStatusEnum.<span class="p">RUNNING</span>.getStatus())<span class="k">;</span></div>
<div class="ln" style="top:454px">179</div>
<svg class="fold" style="top:457px" width="16" height="16" viewBox="0 0 16 16"><path d="M4.6 6.6 L8 10 L11.4 6.6" fill="none" stroke="#63676c" stroke-width="1.1" stroke-linecap="round" stroke-linejoin="round"/></svg>
<div class="cl" style="top:454px">        <span class="k">if</span> (CollUtil.<span class="i">isNotEmpty</span>(startUserSelectAssignees)) {</div>
<div class="ln" style="top:476px">180</div>
<div class="cl" style="top:476px">            variables.put(BpmConstants.<span class="p">PROCESS_INSTANCE_VARIABLE_START_USER_SELECT_ASSIGNEES</span><span class="k">,</span> startUserSelectAssignees)<span class="k">;</span></div>
<div class="ln" style="top:498px">181</div>
<div class="cl" style="top:498px">        }</div>
<div class="ln" style="top:520px">182</div>
<div class="cl" style="top:520px">        ProcessInstance instance = <span class="f">runtimeService</span>.createProcessInstanceBuilder()</div>
<div class="ln" style="top:542px">183</div>
<div class="cl" style="top:542px">                .processDefinitionId(definition.getId())</div>
<div class="ln" style="top:564px">184</div>
<div class="cl" style="top:564px">                .businessKey(businessKey)</div>
<div class="ln" style="top:586px">185</div>
<div class="cl" style="top:586px">                .name(definition.getName().trim())</div>
<div class="ln" style="top:608px">186</div>
<div class="cl" style="top:608px">                .variables(variables)</div>
<div class="ln" style="top:630px">187</div>
<div class="cl" style="top:630px">                .start()<span class="k">;</span></div>
<div class="ln" style="top:652px">188</div>
<div class="cl" style="top:652px">        <span class="k">return</span> instance.getId()<span class="k">;</span></div>
<div class="ln" style="top:674px">189</div>
<div class="cl" style="top:674px">    }</div>
<div class="ln" style="top:696px">190</div>
</div></div>
<div id="tab"></div><div id="tabU"></div>
<svg class="abs" style="left:508px;top:37px" width="16" height="16" viewBox="0 0 16 16"><circle cx="8" cy="8" r="6.5" fill="#25324d" stroke="#548af7" stroke-width="1.1"/><path d="M10.4 6.3 A3 3 0 1 0 10.4 9.7" fill="none" stroke="#548af7" stroke-width="1.1"/></svg>
<div id="tabT" style="letter-spacing:0.091px">BpmProcessInstanceServiceImpl.java</div>
<svg class="abs" style="left:768px;top:40px" width="12" height="12" viewBox="0 0 12 12"><path d="M2.2 1.8 L9.6 9.2 M9.6 1.8 L2.2 9.2" stroke="#8c8f93" stroke-width="1.1" fill="none"/></svg>
<div class="box" style="left:641px;top:452px;width:888px;height:72px"></div>
</div></body></html>
